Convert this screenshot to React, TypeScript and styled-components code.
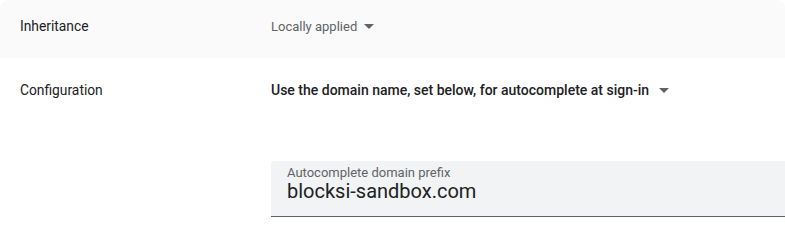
import React from "react";
import styled, { createGlobalStyle } from "styled-components";

const Global = createGlobalStyle`
  html, body { margin: 0; padding: 0; background: #fff; }
  body { font-family: Roboto, "Noto Sans", Arial, sans-serif; -webkit-font-smoothing: antialiased; }
`;

const Panel = styled.div`
  width: 785px;
  height: 242px;
  overflow: hidden;
  display: flex;
  flex-direction: column;
`;

const Row = styled.div<{ $shaded?: boolean }>`
  display: grid;
  grid-template-columns: 251px 1fr;
  padding: ${(p) => (p.$shaded ? "18px 0 0 20px" : "24px 0 0 20px")};
  height: ${(p) => (p.$shaded ? "58px" : "auto")};
  box-sizing: border-box;
  background: ${(p) => (p.$shaded ? "#fafafa" : "#fff")};
  border-radius: ${(p) => (p.$shaded ? "8px 8px 0 0" : "0")};
`;

const Label = styled.div`
  font-size: 13.8px;
  line-height: 17px;
  color: #202124;
`;

const ValueCol = styled.div`
  display: flex;
  flex-direction: column;
  min-width: 0;
`;

const Select = styled.div<{ $strong?: boolean }>`
  display: flex;
  align-items: center;
  gap: ${(p) => (p.$strong ? "10px" : "7px")};
  font-size: ${(p) => (p.$strong ? "14px" : "13px")};
  line-height: 17px;
  font-weight: ${(p) => (p.$strong ? 500 : 400)};
  color: ${(p) => (p.$strong ? "#202124" : "#5f6368")};
`;

const Caret = styled.span`
  width: 0;
  height: 0;
  border-left: 5px solid transparent;
  border-right: 5px solid transparent;
  border-top: 5px solid #5f6368;
`;

const Field = styled.div`
  margin-top: 62px;
  margin-right: -20px;
  height: 56px;
  box-sizing: border-box;
  background: #f1f3f4;
  border-radius: 4px 4px 0 0;
  border-bottom: 1px solid #5f6368;
  padding: 5px 16px 0;
  display: flex;
  flex-direction: column;
`;

const FieldLabel = styled.div`
  font-size: 13px;
  line-height: 14px;
  color: #5f6368;
`;

const FieldValue = styled.div`
  font-size: 20px;
  line-height: 22px;
  color: #202124;
`;

export default function App() {
  return (
    <>
      <Global />
      <Panel>
        <Row $shaded>
          <Label>Inheritance</Label>
          <ValueCol>
            <Select>
              Locally applied <Caret />
            </Select>
          </ValueCol>
        </Row>
        <Row>
          <Label>Configuration</Label>
          <ValueCol>
            <Select $strong>
              Use the domain name, set below, for autocomplete at sign-in <Caret />
            </Select>
            <Field>
              <FieldLabel>Autocomplete domain prefix</FieldLabel>
              <FieldValue>blocksi-sandbox.com</FieldValue>
            </Field>
          </ValueCol>
        </Row>
      </Panel>
    </>
  );
}
